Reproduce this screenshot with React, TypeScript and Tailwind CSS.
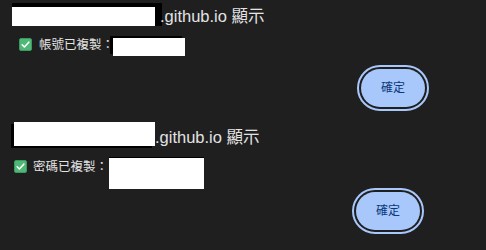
import React from "react";

const font = {
  fontFamily: '"Liberation Sans", "Noto Sans CJK TC", sans-serif',
};

const CheckEmoji = () => (
  <svg width="13" height="13" viewBox="0 0 13 13" className="shrink-0">
    <rect x="0.5" y="0.5" width="12" height="12" rx="1.5" fill="#4fb877" stroke="#3a9a5f" />
    <path d="M3.2 6.8 L5.4 9 L9.8 4.2" fill="none" stroke="#ffffff" strokeWidth="1.6" strokeLinecap="round" strokeLinejoin="round" />
  </svg>
);

const OkButton = () => (
  <button className="w-[64px] h-[38px] rounded-full bg-[#a8c7fa] text-[#0b3a7a] text-[12px] outline-2 outline-offset-2 outline-[#a8c7fa] outline-solid">
    確定
  </button>
);

export default function App() {
  return (
    <div className="w-[486px] h-[250px] overflow-hidden bg-[#1f1f1f] text-[#e3e3e3]" style={font}>
      {/* first alert */}
      <div className="flex items-end pt-[3px] pl-[12px]">
        <div className="bg-black pt-[4px] pr-[7px]">
          <div className="w-[143px] h-[19px] bg-white" />
        </div>
        <span className="-ml-[2px] text-[16.5px] leading-[20px]">.github.io 顯示</span>
      </div>

      <div className="flex items-start mt-[12px] pl-[19px]">
        <CheckEmoji />
        <span className="ml-[7px] text-[12.5px] leading-[14px]">帳號已複製：</span>
        <div className="-ml-[1px] w-[72px] h-[18px] bg-white shadow-[-3px_-2px_0_#000]" />
      </div>

      <div className="flex justify-end pr-[61px] mt-[13px]">
        <OkButton />
      </div>

      {/* second alert */}
      <div className="flex items-end mt-[15px] pl-[14px]">
        <div className="w-[141px] h-[24px] bg-white shadow-[-3px_2px_0_#000]" />
        <span className="text-[16.5px] leading-[17px]">.github.io 顯示</span>
      </div>

      <div className="flex items-start mt-[12px] pl-[14px]">
        <div className="mt-[2px]">
          <CheckEmoji />
        </div>
        <span className="ml-[6px] mt-[2px] text-[12.5px] leading-[14px]">密碼已複製：</span>
        <div className="ml-[1px] w-[95px] h-[31px] bg-white shadow-[0_-1px_0_#000]" />
      </div>

      <div className="flex justify-end pr-[66px] mt-[3px]">
        <OkButton />
      </div>
    </div>
  );
}
